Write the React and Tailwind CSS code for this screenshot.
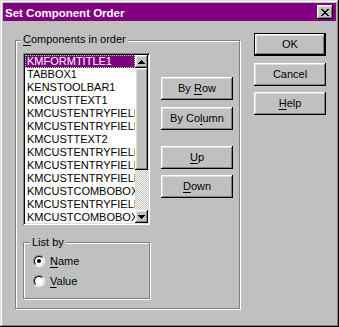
import React from "react";

const bevel =
  "shadow-[inset_-1px_-1px_#000,inset_1px_1px_#fff,inset_-2px_-2px_#808080,inset_2px_2px_#dfdfdf]";

function U({ children }) {
  return <span className="underline decoration-1 underline-offset-[2px]">{children}</span>;
}

function Btn({ children, def, className = "" }) {
  return (
    <div
      className={
        "w-[72px] h-[23px] flex items-center justify-center text-[11px] text-black " +
        (def ? "border border-black " : "") +
        className
      }
    >
      <div className={"w-full h-full flex items-center justify-center " + bevel}>{children}</div>
    </div>
  );
}

function CloseGlyph() {
  const rows = ["11000011", "01100110", "00111100", "00011000", "00111100", "01100110", "11000011"];
  const rects = [];
  rows.forEach((r, y) =>
    r.split("").forEach((c, x) => {
      if (c === "1") rects.push(<rect key={x + "-" + y} x={x} y={y} width="1" height="1" />);
    })
  );
  return (
    <svg width="8" height="7" viewBox="0 0 8 7" shapeRendering="crispEdges" fill="#000">
      {rects}
    </svg>
  );
}

function Arrow({ down }) {
  return (
    <svg width="7" height="4" viewBox="0 0 7 4" shapeRendering="crispEdges" fill="#000">
      {down ? (
        <>
          <rect x="0" y="0" width="7" height="1" />
          <rect x="1" y="1" width="5" height="1" />
          <rect x="2" y="2" width="3" height="1" />
          <rect x="3" y="3" width="1" height="1" />
        </>
      ) : (
        <>
          <rect x="3" y="0" width="1" height="1" />
          <rect x="2" y="1" width="3" height="1" />
          <rect x="1" y="2" width="5" height="1" />
          <rect x="0" y="3" width="7" height="1" />
        </>
      )}
    </svg>
  );
}

function Radio({ checked, children }) {
  return (
    <div className="flex items-center h-[12px]">
      <div className="w-[12px] h-[12px] rounded-full border border-t-[#808080] border-l-[#808080] border-b-white border-r-white">
        <div className="w-full h-full rounded-full bg-white border border-t-black border-l-black border-b-[#dfdfdf] border-r-[#dfdfdf] flex items-center justify-center">
          {checked && <div className="w-[4px] h-[4px] rounded-full bg-black" />}
        </div>
      </div>
      <span className="ml-[5px] text-[11px] leading-[13px] text-black">{children}</span>
    </div>
  );
}

const items = [
  "KMFORMTITLE1",
  "TABBOX1",
  "KENSTOOLBAR1",
  "KMCUSTTEXT1",
  "KMCUSTENTRYFIELD1",
  "KMCUSTENTRYFIELD2",
  "KMCUSTTEXT2",
  "KMCUSTENTRYFIELD3",
  "KMCUSTENTRYFIELD4",
  "KMCUSTENTRYFIELD5",
  "KMCUSTCOMBOBOX1",
  "KMCUSTENTRYFIELD6",
  "KMCUSTCOMBOBOX2",
];

export default function App() {
  return (
    <div className="w-[339px] h-[327px] bg-[#c0c0c0] p-[3px] flex flex-col font-['Liberation_Sans',Arial,sans-serif] shadow-[inset_-1px_-1px_#000,inset_1px_1px_#dfdfdf,inset_-2px_-2px_#808080,inset_2px_2px_#fff] select-none">
      {/* Title bar */}
      <div className="h-[18px] bg-[#800080] flex items-center justify-between pl-[2px] pr-[3px]">
        <span className="text-white font-bold text-[11.5px] leading-[13px] pt-[2px]">
          Set Component Order
        </span>
        <div className={"w-[16px] h-[14px] bg-[#c0c0c0] flex items-center justify-center " + bevel}>
          <CloseGlyph />
        </div>
      </div>

      {/* Body */}
      <div className="flex flex-row">
        {/* Main group */}
        <div className="relative ml-[12px] mt-[19px] w-[225px] h-[269px] border border-[#808080] shadow-[inset_1px_1px_#fff,1px_1px_#fff]">
          <span className="absolute left-[5px] top-[-8px] px-[2px] bg-[#c0c0c0] text-[11px] leading-[13px] text-black">
            <U>C</U>omponents in order
          </span>
          <div className="flex flex-row pl-[7px] pt-[12px]">
            <div className="flex flex-col w-[127px]">
              {/* Listbox */}
              <div className="w-[127px] h-[172px] p-[2px] bg-white shadow-[inset_1px_1px_#808080,inset_-1px_-1px_#fff,inset_2px_2px_#000,inset_-2px_-2px_#dfdfdf] flex flex-row">
                <div className="w-[110px] h-[168px] overflow-hidden flex flex-col">
                  {items.map((t, i) => (
                    <div
                      key={i}
                      className={
                        "h-[13px] shrink-0 leading-[13px] text-[11px] pl-[2px] whitespace-nowrap overflow-hidden " +
                        (i === 0
                          ? "bg-[#800080] text-white outline-1 outline-dotted outline-[#80ff80] -outline-offset-1"
                          : "text-black")
                      }
                    >
                      {t}
                    </div>
                  ))}
                </div>
                <div className="w-[13px] h-[168px] flex flex-col bg-[#c0c0c0]">
                  <div className={"w-[13px] h-[13px] shrink-0 flex items-center justify-center " + bevel}>
                    <Arrow />
                  </div>
                  <div className={"w-[13px] h-[102px] shrink-0 " + bevel} />
                  <div className="w-[13px] h-[40px] shrink-0 bg-[repeating-conic-gradient(#fff_0_25%,#c0c0c0_0_50%)] bg-[length:2px_2px]" />
                  <div className={"w-[13px] h-[13px] shrink-0 flex items-center justify-center " + bevel}>
                    <Arrow down />
                  </div>
                </div>
              </div>

              {/* List by group */}
              <div className="relative mt-[17px] w-[127px] h-[57px] border border-[#808080] shadow-[inset_1px_1px_#fff,1px_1px_#fff] pl-[9px] pt-[12px] flex flex-col gap-[8px]">
                <span className="absolute left-[6px] top-[-7px] px-[2px] bg-[#c0c0c0] text-[11px] leading-[13px] text-black">
                  List by
                </span>
                <Radio checked>
                  <U>N</U>ame
                </Radio>
                <Radio>
                  <U>V</U>alue
                </Radio>
              </div>
            </div>

            {/* Middle buttons */}
            <div className="flex flex-col ml-[11px] mt-[24px]">
              <Btn>
                By&nbsp;<U>R</U>ow
              </Btn>
              <Btn className="mt-[7px]">
                By Co<U>l</U>umn
              </Btn>
              <Btn className="mt-[16px]">
                <U>U</U>p
              </Btn>
              <Btn className="mt-[6px]">
                <U>D</U>own
              </Btn>
            </div>
          </div>
        </div>

        {/* Right buttons */}
        <div className="flex flex-col ml-[14px] mt-[12px]">
          <Btn def>OK</Btn>
          <Btn className="mt-[7px]">Cancel</Btn>
          <Btn className="mt-[6px]">
            <U>H</U>elp
          </Btn>
        </div>
      </div>
    </div>
  );
}
